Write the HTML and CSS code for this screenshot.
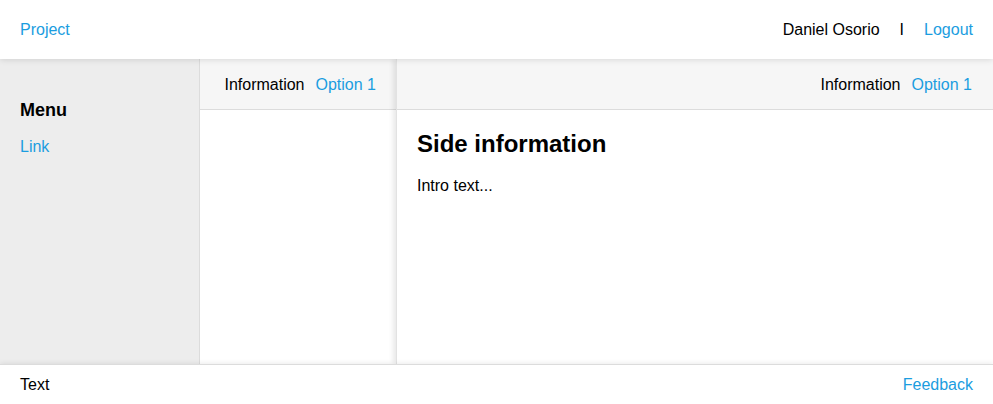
FILE: index.html
```html
<!DOCTYPE html>
<html>
<head>
<meta charset="utf-8">
<link rel="stylesheet" href="styles.css">
</head>
<body>
<div class="app">
  <header class="topbar">
    <a class="link" href="#">Project</a>
    <nav class="user">
      <span>Daniel Osorio</span>
      <span>I</span>
      <a class="link" href="#">Logout</a>
    </nav>
  </header>
  <main class="main">
    <aside class="sidebar">
      <h3 class="menu-title">Menu</h3>
      <a class="link" href="#">Link</a>
    </aside>
    <section class="middle">
      <div class="panel-bar">
        <span>Information</span>
        <a class="link" href="#">Option 1</a>
      </div>
    </section>
    <section class="detail">
      <div class="panel-bar">
        <span>Information</span>
        <a class="link" href="#">Option 1</a>
      </div>
      <div class="detail-body">
        <h2 class="detail-title">Side information</h2>
        <p class="intro">Intro text...</p>
      </div>
    </section>
  </main>
  <footer class="footer">
    <span>Text</span>
    <a class="link" href="#">Feedback</a>
  </footer>
</div>
</body>
</html>
```
FILE: styles.css
```css
* { box-sizing: border-box; }
html, body { margin: 0; height: 100%; }
body {
  font-family: "Liberation Sans", Arial, sans-serif;
  font-size: 16px;
  color: #000;
  background: #fff;
}
.link { color: #1b9de0; text-decoration: none; }
.app { display: flex; flex-direction: column; height: 100vh; }
.topbar {
  height: 59px;
  flex: none;
  display: flex;
  align-items: center;
  justify-content: space-between;
  padding: 0 20px 0 20px;
  background: #fff;
  box-shadow: 0 1px 6px rgba(0,0,0,0.12);
  position: relative;
  z-index: 3;
}
.user { display: flex; gap: 20px; }
.main { flex: 1; display: flex; min-height: 0; }
.sidebar {
  width: 200px;
  flex: none;
  background: #ededed;
  border-right: 1px solid #dcdcdc;
  padding: 40px 20px;
}
.menu-title { margin: 0 0 17px; font-size: 18px; font-weight: bold; line-height: 22px; }
.middle { width: 196px; flex: none; background: #fff; }
.panel-bar {
  height: 51px;
  display: flex;
  align-items: center;
  justify-content: flex-end;
  gap: 11px;
  padding: 2px 20px 0;
  background: #f6f6f6;
  border-bottom: 1px solid #dcdcdc;
}
.detail {
  flex: 1;
  background: #fff;
  border-left: 1px solid #e2e2e2;
  box-shadow: -3px 0 5px rgba(0,0,0,0.09);
  position: relative;
  z-index: 1;
}
.detail .panel-bar { padding-right: 21px; }
.detail-body { padding: 20px 20px; }
.detail-title { margin: 0 0 18px; font-size: 24px; font-weight: bold; line-height: 28px; }
.intro { margin: 0; line-height: 20px; }
.footer {
  height: 40px;
  flex: none;
  display: flex;
  align-items: center;
  justify-content: space-between;
  padding: 0 20px 0 20px;
  border-top: 1px solid #dcdcdc;
  box-shadow: 0 -1px 5px rgba(0,0,0,0.08);
  background: #fff;
  position: relative;
  z-index: 2;
}
```
